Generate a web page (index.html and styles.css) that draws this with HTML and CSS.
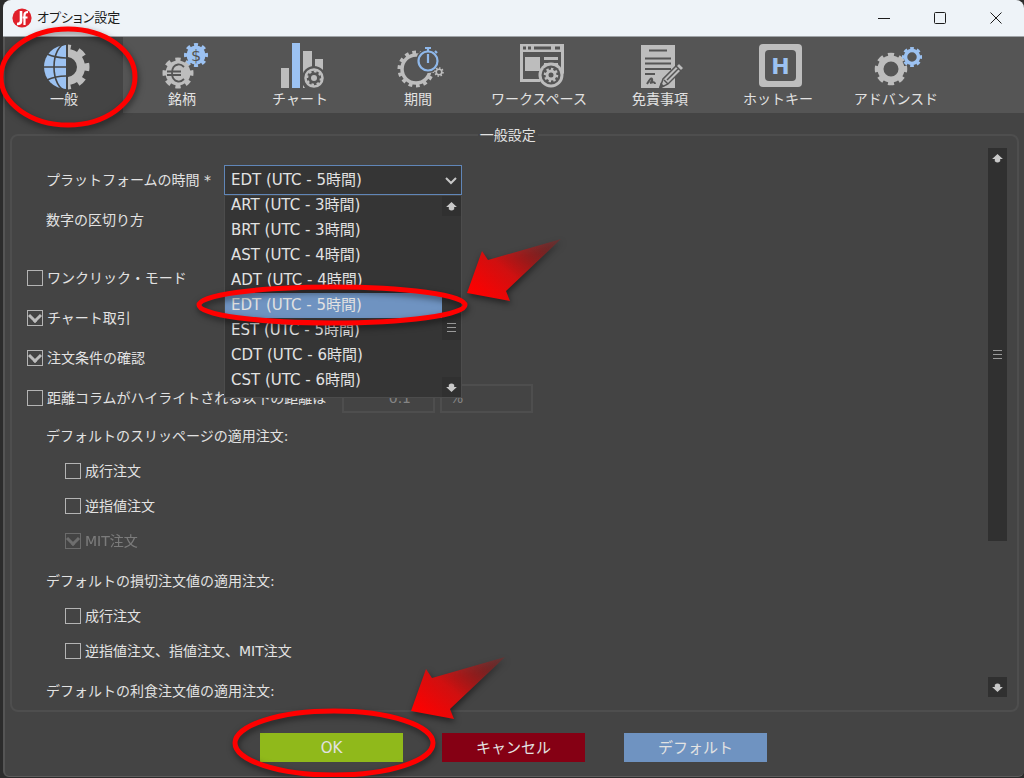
FILE: index.html
```html
<!DOCTYPE html>
<html lang="ja">
<head>
  <meta charset="UTF-8" />
  <meta name="viewport" content="width=device-width, initial-scale=1.0"/>
  <title>オプション設定</title>
  <link rel="stylesheet" href="styles.css">
</head>
<body>
  <div class="window">
    <header class="titlebar">
      <svg class="logo" viewBox="0 0 20 20">
        <circle cx="10" cy="10" r="9.6" fill="#e0202a"/>
        <path d="M9 3v10q0 3-4 3" fill="none" stroke="#fff" stroke-width="2.6"/>
        <path d="M12.5 17V7q0-3 3.5-3M10.5 9.5h5" fill="none" stroke="#fff" stroke-width="2.2"/>
      </svg>
      <h1>オプション設定</h1>
      <div class="controls">
        <button type="button" aria-label="最小化"><svg viewBox="0 0 14 14"><path d="M1 7.5h12"/></svg></button>
        <button type="button" aria-label="最大化"><svg viewBox="0 0 14 14"><rect x="1.5" y="1.5" width="11" height="11" rx="1"/></svg></button>
        <button type="button" aria-label="閉じる"><svg viewBox="0 0 14 14"><path d="M1.5 1.5l11 11M12.5 1.5l-11 11"/></svg></button>
      </div>
    </header>

    <nav class="toolbar">
      <div class="anchor">
        <button type="button" class="tab active">
          <svg class="icon" viewBox="0 0 48 48">
            <clipPath id="left"><rect x="0" y="0" width="26" height="48"/></clipPath>
            <clipPath id="right"><rect x="28" y="0" width="22" height="48"/></clipPath>
            <g clip-path="url(#left)">
              <circle class="blue" cx="26" cy="24" r="22"/>
              <g fill="none" stroke="#444" stroke-width="1.6">
                <ellipse cx="26" cy="24" rx="12" ry="23"/>
                <path d="M3 24h24M7 11q9 4 20 4M7 37q9-4 20-4"/>
              </g>
            </g>
            <g clip-path="url(#right)" fill="none" stroke="#bdbdbd">
              <circle cx="27" cy="24" r="14" stroke-width="8"/>
              <circle cx="27" cy="24" r="19.5" stroke-width="6" pathLength="16" stroke-dasharray="1 1" stroke-dashoffset="0.5"/>
            </g>
          </svg>
          一般
        </button>
        <svg class="mark mark-tab" viewBox="0 20 145 115">
          <ellipse cx="68" cy="77" rx="67" ry="48"/>
        </svg>
      </div>

      <button type="button" class="tab">
        <svg class="icon" viewBox="0 0 48 48">
          <circle class="grey" cx="20" cy="30" r="12.5"/>
          <circle class="teeth" cx="20" cy="30" r="13" stroke-width="5" pathLength="16" stroke-dasharray="1 1" stroke-dashoffset="0.5"/>
          <path d="M26 24q-3-3-6-2.500q-6 1-6 8.500t6 8.500q3 .5 6-2.500M9 28.500h14M9 32h14" fill="none" stroke="#555" stroke-width="1.8"/>
          <circle class="blue" cx="38" cy="12" r="9.5"/>
          <circle class="teeth blue-teeth" cx="38" cy="12" r="10" stroke-width="4" pathLength="16" stroke-dasharray="1 1" stroke-dashoffset="0.5"/>
          <text x="38" y="18" class="dollar">$</text>
        </svg>
        銘柄
      </button>

      <button type="button" class="tab">
        <svg class="icon" viewBox="0 0 48 48">
          <path class="grey" d="M5 25h8v20H5zM27 8h9v30h-9zM39 16h8v14h-8zM27 42l2 3h-2z"/>
          <rect class="blue" x="16" y="0" width="8" height="45"/>
          <circle cx="38" cy="35" r="12" fill="#555"/>
          <circle class="teeth" cx="38" cy="35" r="8.5" stroke-width="2.5"/>
          <circle class="teeth" cx="38" cy="35" r="6.8" stroke-width="2" pathLength="16" stroke-dasharray="1 1"/>
          <circle class="grey" cx="38" cy="35" r="3"/>
        </svg>
        チャート
      </button>

      <button type="button" class="tab">
        <svg class="icon" viewBox="0 0 48 48">
          <circle class="teeth" cx="22" cy="26" r="14" stroke-width="3.5"/>
          <circle class="teeth" cx="22" cy="26" r="16.5" stroke-width="4" pathLength="28" stroke-dasharray="1 1"/>
          <circle cx="34" cy="18" r="12" fill="#555"/>
          <g fill="none" stroke="#8fb8ea" stroke-width="2.2">
            <circle cx="34" cy="18" r="9.5"/>
            <path d="M34 11v9M34 5v4M31 5h6M41 8l2 2"/>
          </g>
          <circle class="teeth" cx="45" cy="29" r="2.8" stroke-width="1.6"/>
          <circle class="teeth" cx="45" cy="29" r="4" stroke-width="1.6" pathLength="16" stroke-dasharray="1 1"/>
        </svg>
        期間
      </button>

      <button type="button" class="tab">
        <svg class="icon" viewBox="0 0 48 48">
          <path class="grey" fill-rule="evenodd" d="M5 1h44v30l-3-2V9H8v27h17v3H5z"/>
          <path d="M8 3.500h3v3H8zM13 3.500h3v3h-3zM19 3.500h17v3H19zM40 3.500h5v3h-5z" fill="#555"/>
          <path class="grey" d="M10 14h15v14H10zM29 14h14v3H29zM29 20h14v2H29z"/>
          <circle class="grey" cx="36" cy="32" r="12.5"/>
          <circle cx="36" cy="32" r="9.5" fill="#555"/>
          <circle class="teeth" cx="36" cy="32" r="4" stroke-width="3"/>
          <circle class="teeth" cx="36" cy="32" r="6" stroke-width="2.5" pathLength="16" stroke-dasharray="1 1"/>
        </svg>
        ワークスペース
      </button>

      <button type="button" class="tab">
        <svg class="icon" viewBox="0 0 48 48">
          <rect class="grey" x="5" y="2" width="34" height="43"/>
          <path d="M13 7.500h18M9 15.500h26M9 20.500h26M9 26h26M9 31h10M11 41q4-7 5-5t-2 4q5-2 5 1" fill="none" stroke="#555" stroke-width="2"/>
          <path d="M24 45l3-9 16-16 5 5-16 16z" fill="#bdbdbd" stroke="#555" stroke-width="1.5"/>
          <path d="M28 37l4 4M31 37l12-12M40 23l5 5M24 44l3-1-2-2z" fill="none" stroke="#555" stroke-width="1.5"/>
        </svg>
        免責事項
      </button>

      <button type="button" class="tab">
        <svg class="icon" viewBox="0 0 48 48">
          <rect class="grey" x="5" y="1" width="43" height="43" rx="4"/>
          <rect x="11" y="7" width="31" height="31" rx="4" fill="#555"/>
          <text x="26.5" y="31" class="key">H</text>
        </svg>
        ホットキー
      </button>

      <button type="button" class="tab">
        <svg class="icon" viewBox="0 0 48 48">
          <circle class="teeth" cx="19" cy="26" r="10.5" stroke-width="6"/>
          <circle class="teeth" cx="19" cy="26" r="14" stroke-width="4.5" pathLength="16" stroke-dasharray="1.1 0.9" stroke-dashoffset="0.55"/>
          <circle class="teeth blue-teeth" cx="40" cy="14" r="6.5" stroke-width="3.5"/>
          <circle class="teeth blue-teeth" cx="40" cy="14" r="8.8" stroke-width="2.5" pathLength="16" stroke-dasharray="1.1 0.9" stroke-dashoffset="0.55"/>
        </svg>
        アドバンスド
      </button>
    </nav>

    <main>
      <fieldset class="panel">
        <legend>一般設定</legend>
        <div class="panel-body">
          <div class="form">
            <div class="row indent">
              <label class="time-label" for="timezone">プラットフォームの時間 *</label>
              <div class="combo">
                <select id="timezone">
                  <option>EDT (UTC - 5時間)</option>
                </select>
                <svg class="chevron" viewBox="0 0 12 8"><path d="M1 1l5 5 5-5"/></svg>
                <div class="popup">
                  <ul role="listbox" aria-label="プラットフォームの時間">
                    <li role="option">ART (UTC - 3時間)</li>
                    <li role="option">BRT (UTC - 3時間)</li>
                    <li role="option">AST (UTC - 4時間)</li>
                    <li role="option">ADT (UTC - 4時間)</li>
                    <li role="option" class="selected" aria-selected="true">EDT (UTC - 5時間)</li>
                    <li role="option">EST (UTC - 5時間)</li>
                    <li role="option">CDT (UTC - 6時間)</li>
                    <li role="option">CST (UTC - 6時間)</li>
                  </ul>
                  <div class="scroll popup-scroll">
                    <button type="button" aria-label="上へ"><svg viewBox="0 0 12 10"><path d="M6 0l6 5.500H9V8q-3 3-6 0V5.500H0z"/></svg></button>
                    <div class="thumb"><i class="grip"></i></div>
                    <button type="button" aria-label="下へ"><svg viewBox="0 0 12 10"><path d="M6 10l6-5.500H9V2q-3-3-6 0v2.500H0z"/></svg></button>
                  </div>
                </div>
                <svg class="mark mark-combo" viewBox="190 230 380 110">
                  <defs>
                    <linearGradient id="fade" x1="0" y1="0.8" x2="1" y2="0">
                      <stop offset="0" stop-color="#f00"/>
                      <stop offset="0.4" stop-color="#d01010"/>
                      <stop offset="1" stop-color="#8a2020" stop-opacity="0.4"/>
                    </linearGradient>
                  </defs>
                  <ellipse class="thin" cx="332" cy="306" rx="133" ry="18"/>
                  <path fill="url(#fade)" d="M467 294l15-42 6 9 73-21-55 52 4 10z"/>
                </svg>
              </div>
            </div>
            <div class="row indent">数字の区切り方</div>

            <div class="row space"><input type="checkbox" id="oneClick"><label for="oneClick">ワンクリック・モード</label></div>
            <div class="row"><input type="checkbox" id="chartTrade" checked><label for="chartTrade">チャート取引</label></div>
            <div class="row"><input type="checkbox" id="confirm" checked><label for="confirm">注文条件の確認</label></div>
            <div class="row">
              <input type="checkbox" id="distance"><label class="distance-label" for="distance">距離コラムがハイライトされる以下の距離は</label>
              <input type="text" class="field number" value="0.1" aria-label="距離" disabled>
              <input type="text" class="field" value="%" aria-label="単位" disabled>
            </div>

            <div class="row small indent">デフォルトのスリッページの適用注文:</div>
            <div class="row small sub"><input type="checkbox" id="slipMarket"><label for="slipMarket">成行注文</label></div>
            <div class="row small sub"><input type="checkbox" id="slipStop"><label for="slipStop">逆指値注文</label></div>
            <div class="row small sub"><input type="checkbox" id="slipMit" checked disabled><label for="slipMit">MIT注文</label></div>

            <div class="row small indent group">デフォルトの損切注文値の適用注文:</div>
            <div class="row small sub"><input type="checkbox" id="lossMarket"><label for="lossMarket">成行注文</label></div>
            <div class="row small sub"><input type="checkbox" id="lossStop"><label for="lossStop">逆指値注文、指値注文、MIT注文</label></div>

            <div class="row small indent group">デフォルトの利食注文値の適用注文:</div>
          </div>

          <div class="scroll panel-scroll">
            <button type="button" aria-label="上へ"><svg viewBox="0 0 12 10"><path d="M6 0l6 5.500H9V8q-3 3-6 0V5.500H0z"/></svg></button>
            <div class="thumb"><i class="grip"></i></div>
            <button type="button" aria-label="下へ"><svg viewBox="0 0 12 10"><path d="M6 10l6-5.500H9V2q-3-3-6 0v2.500H0z"/></svg></button>
          </div>
        </div>
      </fieldset>
    </main>

    <footer class="actions">
      <div class="anchor">
        <button type="button" class="btn ok">OK</button>
        <svg class="mark mark-ok" viewBox="225 650 285 128">
          <ellipse cx="333" cy="743" rx="99" ry="32"/>
          <path fill="url(#fade)" d="M410 711l15-42 6 9 73-21-55 52 4 10z"/>
        </svg>
      </div>
      <button type="button" class="btn cancel">キャンセル</button>
      <button type="button" class="btn default">デフォルト</button>
    </footer>
  </div>
</body>
</html>
```
FILE: styles.css
```css
* {
  box-sizing: border-box;
}

body {
  margin: 0;
  background-color: #2c2c2c;
  color: #e2e2e2;
  font-family: "DejaVu Sans", "Noto Sans CJK JP", sans-serif;
  font-size: 14px;
  line-height: 18px;
  overflow-x: hidden;
}

button,
input,
select {
  font: inherit;
  color: inherit;
}

button {
  border: 0;
  background: none;
  padding: 0;
}

.window {
  margin-left: 3px;
  background-color: #444;
  border-left: 2px solid #555;
  border-bottom: 1px solid #5c5c5c;
  border-radius: 8px 8px 6px 6px;
}

/* title bar */

.titlebar {
  display: flex;
  align-items: center;
  height: 37px;
  margin-left: -2px;
  padding-left: 9px;
  background-color: #eef3f8;
  border-bottom: 1px solid #a0a4a8;
  border-radius: 8px 8px 0 0;
  color: #1c1c1c;
}

.logo {
  width: 20px;
  height: 20px;
}

.titlebar h1 {
  margin: 0 auto 0 5px;
  font-size: 13px;
  font-weight: normal;
  font-feature-settings: "palt";
}

.controls {
  display: flex;
}

.controls button {
  width: 56px;
  height: 36px;
}

.controls svg {
  display: block;
  width: 14px;
  height: 14px;
  margin: 0 auto;
  fill: none;
  stroke: #1c1c1c;
}

/* toolbar */

.toolbar {
  display: flex;
  height: 76px;
  background-color: #555;
}

.anchor {
  position: relative;
}

.tab {
  display: flex;
  flex-direction: column;
  align-items: center;
  min-width: 118px;
  height: 76px;
  padding: 6px 14px 0;
}

.tab.active {
  background-color: #444;
}

.icon {
  width: 48px;
  height: 48px;
  margin-bottom: -1px;
  overflow: visible;
}

.grey {
  fill: #bdbdbd;
}

.blue {
  fill: #9cc2f2;
}

.teeth {
  fill: none;
  stroke: #bdbdbd;
}

.blue-teeth {
  stroke: #9cc2f2;
}

.dollar {
  fill: #555;
  font-size: 16px;
  text-anchor: middle;
}

.key {
  fill: #9cc2f2;
  font-size: 22px;
  font-weight: bold;
  text-anchor: middle;
}

/* red marks */

.mark {
  position: absolute;
  z-index: 5;
  overflow: visible;
  pointer-events: none;
  filter: drop-shadow(1px 3px 3px rgba(0, 0, 0, 0.5));
}

.mark ellipse {
  fill: none;
  stroke: #f00;
  stroke-width: 5;
}

.mark-tab {
  left: -5px;
  top: -17px;
  width: 145px;
  height: 115px;
}

.mark-combo {
  left: -34px;
  top: 64px;
  width: 380px;
  height: 110px;
}

.mark-ok {
  left: -34px;
  top: -83px;
  width: 285px;
  height: 128px;
}

/* settings panel */

main {
  padding: 13px 5px 0;
}

.panel {
  margin: 0;
  min-width: 0;
  padding: 4px 10px 2px 15px;
  border: 2px solid #4e4e4e;
  border-radius: 8px;
}

.panel legend {
  margin-left: 46%;
  padding: 0 2px;
}

.panel-body {
  display: flex;
}

.form {
  flex: 1;
  padding-top: 12px;
}

.row {
  display: flex;
  align-items: center;
  height: 40px;
}

.row.small {
  height: 35px;
}

.space {
  margin-top: 18px;
}

.group {
  margin-top: 5px;
}

.indent {
  padding-left: 19px;
}

.sub {
  padding-left: 38px;
}

input[type="checkbox"] {
  appearance: none;
  display: grid;
  place-items: center;
  width: 16px;
  height: 16px;
  margin: 0 4px 0 0;
  border: 1px solid #b4b4b4;
}

input[type="checkbox"]:checked::before {
  content: "";
  width: 7px;
  height: 7px;
  margin-bottom: 4px;
  border: solid #bcbcbc;
  border-width: 0 3px 3px 0;
  transform: rotate(45deg);
}

input[type="checkbox"]:disabled,
input[type="checkbox"]:disabled + label {
  opacity: 0.35;
}

.time-label {
  width: 178px;
}

.combo {
  position: relative;
  width: 238px;
}

.combo select {
  appearance: none;
  display: block;
  width: 100%;
  height: 30px;
  padding: 0 6px;
  background-color: #353535;
  border: 1px solid #6086b8;
  border-radius: 0;
  font-size: 15px;
}

.chevron {
  position: absolute;
  right: 5px;
  top: 12px;
  width: 12px;
  height: 8px;
  fill: none;
  stroke: #c8c8c8;
  stroke-width: 2;
}

.popup {
  position: absolute;
  z-index: 2;
  top: 31px;
  left: 0;
  display: flex;
  width: 238px;
  height: 202px;
  background-color: #353535;
  border: 1px solid #4c4c4c;
  border-top: 0;
}

.popup ul {
  display: flex;
  flex: 1;
  flex-direction: column;
  justify-content: flex-end;
  margin: 0;
  padding: 0 0 4px;
  overflow: hidden;
  list-style: none;
  font-size: 15px;
}

.popup li {
  flex: none;
  height: 25px;
  padding-left: 6px;
  line-height: 25px;
}

.popup li.selected {
  background-color: #6f93c1;
}

.distance-label {
  width: 295px;
}

.field {
  width: 93px;
  height: 29px;
  margin-right: 5px;
  padding: 0 8px;
  background: none;
  border: 2px solid #4e4e4e;
  color: #858585;
}

.field.number {
  padding-right: 22px;
  text-align: right;
}

/* scroll bars */

.scroll {
  display: flex;
  flex-direction: column;
  width: 19px;
}

.scroll button {
  display: grid;
  place-items: center;
  height: 20px;
  background-color: #303030;
}

.scroll button svg {
  width: 11px;
  height: 9px;
  fill: #c8c8c8;
}

.scroll .thumb {
  display: grid;
  place-items: center;
  background-color: #303030;
}

.grip {
  width: 9px;
  height: 9px;
  border: solid #9a9a9a;
  border-width: 1px 0;
  background: linear-gradient(#9a9a9a, #9a9a9a) center / 9px 1px no-repeat;
}

.panel-scroll {
  margin-bottom: 11px;
}

.panel-scroll .thumb {
  height: 68%;
  margin-bottom: auto;
}

.popup-scroll .thumb {
  height: 26px;
  margin: auto 0 37px;
}

/* bottom buttons */

.actions {
  display: flex;
  justify-content: center;
  gap: 39px;
  padding: 21px 2px 14px 0;
}

.btn {
  display: block;
  width: 143px;
  height: 29px;
  font-size: 15px;
}

.ok {
  background-color: #90b91b;
}

.cancel {
  background-color: #850014;
}

.default {
  background-color: #6f93c1;
}
```
